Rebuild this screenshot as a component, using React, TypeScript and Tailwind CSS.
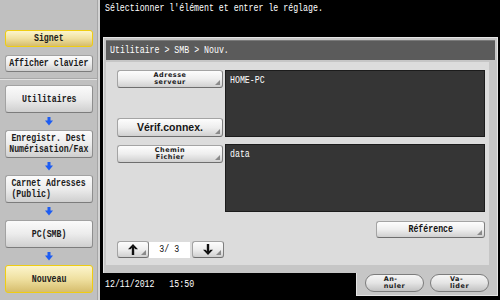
import React from 'react';

const MONO = "font-['Liberation_Mono',monospace]";

function Cond({ children, className = '' }: { children: React.ReactNode; className?: string }): React.ReactElement {
  return <span className={`inline-block whitespace-pre scale-x-75 ${className}`}>{children}</span>;
}

function FlowArrow(): React.ReactElement {
  return (
    <div className="flex h-[17px] w-[88px] items-center justify-center">
      <svg width="8" height="9" viewBox="0 0 8 9">
        <rect x="2.5" y="0" width="3" height="4" fill="#1d5cf2" />
        <polygon points="0,3.5 8,3.5 4,8.5" fill="#1d5cf2" />
      </svg>
    </div>
  );
}

function SideButton({ lines, yellow = false, tall = false }: { lines: string[]; yellow?: boolean; tall?: boolean }): React.ReactElement {
  const skin = yellow
    ? 'border-[#efcd12] bg-linear-to-b from-[#fcf5cc] via-[#efe0a0] to-[#d6bd6c]'
    : 'border-[#a2a2a2] border-b-[#7c7c7c] border-r-[#8e8e8e] bg-linear-to-b from-[#fbfbfb] via-[#ececec] to-[#cfcfcf]';
  return (
    <div
      className={`flex w-[88px] flex-col items-center justify-center rounded-[3px] border text-[11px] leading-[11px] font-bold text-[#1c1c1c] ${MONO} ${skin} ${tall ? 'h-[28px]' : 'h-[17px]'}`}
    >
      {lines.map((l) => (
        <Cond key={l}>{l}</Cond>
      ))}
    </div>
  );
}

function Corner(): React.ReactElement {
  return <span className="absolute right-[2px] bottom-[2px] h-0 w-0 border-b-[5px] border-l-[5px] border-b-[#8a8a8a] border-l-transparent" />;
}

function KeyButton({ children, className = '' }: { children: React.ReactNode; className?: string }): React.ReactElement {
  return (
    <div
      className={`relative flex items-center justify-center rounded-[3px] border border-[#a4a4a4] border-r-[#7e7e7e] border-b-[#6e6e6e] bg-linear-to-b from-[#fdfdfd] via-[#eeeeee] to-[#d0d0d0] text-[#141414] ${className}`}
    >
      {children}
      <Corner />
    </div>
  );
}

function TinyLabel({ top, bottom }: { top: string; bottom: string }): React.ReactElement {
  return (
    <div className="flex flex-col items-center text-[6.5px] leading-[7.5px] font-bold tracking-[0.5px] text-[#1a1a1a] font-['DejaVu_Sans',sans-serif]">
      <span>{top}</span>
      <span>{bottom}</span>
    </div>
  );
}

function ValueBox({ value }: { value: string }): React.ReactElement {
  return (
    <div className={`flex-1 border border-[#1c1c1c] bg-[#353535] pt-[3px] pl-[4px] text-[11px] leading-[13px] text-white ${MONO}`}>
      <Cond className="origin-left">{value}</Cond>
    </div>
  );
}

function ArrowIcon({ up }: { up: boolean }): React.ReactElement {
  return (
    <svg width="10" height="11" viewBox="0 0 10 11" className={up ? '' : 'rotate-180'}>
      <rect x="3.8" y="3" width="2.4" height="8" fill="#111" />
      <polygon points="5,0 10,5.2 7.4,5.2 5,2.8 2.6,5.2 0,5.2" fill="#111" />
    </svg>
  );
}

function Pill({ top, bottom }: { top: string; bottom: string }): React.ReactElement {
  return (
    <div className="flex h-[18px] w-[59px] items-center justify-center rounded-full border border-[#7c7c7c] bg-linear-to-b from-[#f6f6f6] via-[#e4e4e4] to-[#c2c2c2]">
      <div className="flex flex-col items-start text-[6.5px] leading-[7.5px] font-bold tracking-[0.5px] text-[#1a1a1a] font-['DejaVu_Sans',sans-serif]">
        <span>{top}</span>
        <span>{bottom}</span>
      </div>
    </div>
  );
}

function Sidebar(): React.ReactElement {
  return (
    <aside className="flex w-[100px] shrink-0 flex-col border-r-2 border-[#d4d4d4] bg-[#c0c0c0] pt-[30px] pl-[5px] shadow-[inset_-1px_0_0_#a6a6a6]">
      <SideButton lines={['Signet']} yellow />
      <div className="mt-[8px]">
        <SideButton lines={['Afficher clavier']} />
      </div>
      <div className="mt-[6px] -ml-[5px] h-px w-[97px] bg-[#a8a8a8]" />
      <div className="-ml-[5px] h-px w-[97px] bg-[#e2e2e2]" />
      <div className="mt-[5px] flex flex-col">
        <SideButton lines={['Utilitaires']} tall />
        <FlowArrow />
        <SideButton lines={['Enregistr. Dest', 'Numérisation/Fax']} tall />
        <FlowArrow />
        <SideButton lines={['Carnet Adresses', '(Public)       ']} tall />
        <FlowArrow />
        <SideButton lines={['PC(SMB)']} tall />
        <FlowArrow />
        <SideButton lines={['Nouveau']} yellow tall />
      </div>
    </aside>
  );
}

function ContentArea(): React.ReactElement {
  return (
    <div className="mt-[2px] mr-[6px] flex flex-col bg-[#dcdcdc] pt-[8px] pr-[4px] pb-[7px] pl-[11px]">
      <div className="flex h-[67px] gap-[2px]">
        <div className="flex w-[106px] flex-col justify-between">
          <KeyButton className="h-[18px]">
            <TinyLabel top="Adresse" bottom="serveur" />
          </KeyButton>
          <KeyButton className="h-[19px]">
            <span className="text-[10.5px] font-bold font-['Liberation_Sans',sans-serif]">Vérif.connex.</span>
          </KeyButton>
        </div>
        <ValueBox value="HOME-PC" />
      </div>
      <div className="mt-[7px] flex h-[68px] gap-[2px]">
        <div className="flex w-[106px] flex-col pt-[1px]">
          <KeyButton className="h-[18px]">
            <TinyLabel top="Chemin" bottom="Fichier" />
          </KeyButton>
        </div>
        <ValueBox value="data" />
      </div>
      <div className="mt-[9px] flex justify-end">
        <KeyButton className={`h-[17px] w-[109px] text-[11px] font-bold ${MONO}`}>
          <Cond>Référence</Cond>
        </KeyButton>
      </div>
      <div className="mt-[3px] flex h-[17px] items-center">
        <KeyButton className="h-[17px] w-[32px]">
          <ArrowIcon up />
        </KeyButton>
        <div className={`flex h-[16px] w-[41px] items-center justify-center bg-white text-[11px] text-[#111] ${MONO}`}>
          <Cond>3/ 3</Cond>
        </div>
        <KeyButton className="ml-[2px] h-[17px] w-[32px]">
          <ArrowIcon up={false} />
        </KeyButton>
      </div>
    </div>
  );
}

export default function App(): React.ReactElement {
  return (
    <div className="flex h-[300px] w-[500px] overflow-hidden bg-black">
      <Sidebar />
      <main className="flex flex-1 flex-col">
        <div className={`h-[37px] pt-[2px] pl-[5px] text-[11px] leading-[13px] text-white ${MONO}`}>
          <Cond className="origin-left">Sélectionner l'élément et entrer le réglage.</Cond>
        </div>
        <div className="mr-[2px] ml-[3px] border border-b-0 border-[#e4e4e4] bg-[#c6c6c6] px-[2px] pt-[2px] pb-[8px]">
          <div className={`flex h-[20px] items-center border-t border-[#7a7a7a] bg-[#5b5b5b] pl-[4px] text-[11px] text-white ${MONO}`}>
            <Cond className="origin-left">Utilitaire &gt; SMB &gt; Nouv.</Cond>
          </div>
          <ContentArea />
        </div>
        <div className="flex flex-1 items-start">
          <div className={`flex-1 pt-[5px] pl-[5px] text-[11px] leading-[13px] text-white ${MONO}`}>
            <Cond className="origin-left">12/11/2012   15:50</Cond>
          </div>
          <div className="mr-[2px] flex h-[23px] w-[142px] gap-[6px] border-x border-b border-[#e4e4e4] bg-[#c6c6c6] pt-[1px] pl-[8px]">
            <Pill top="An-" bottom="nuler" />
            <Pill top="Va-" bottom="lider" />
          </div>
        </div>
      </main>
    </div>
  );
}
